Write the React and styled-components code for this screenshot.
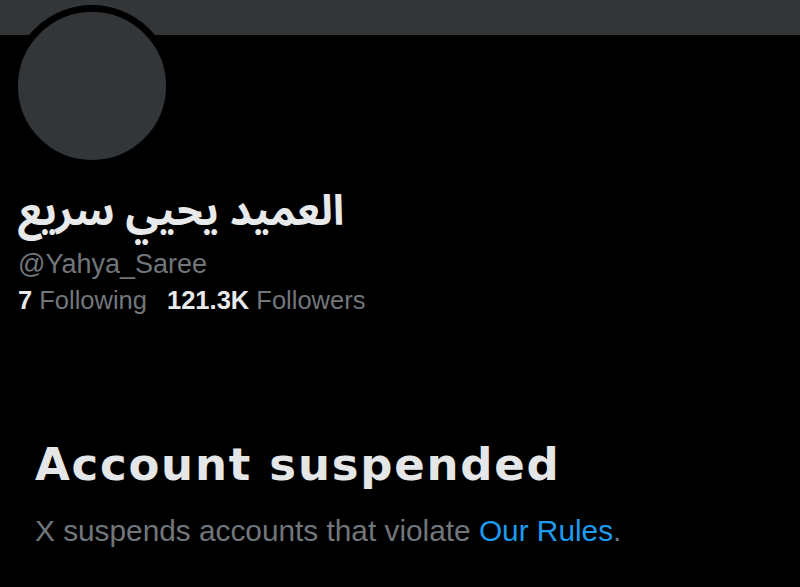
import React from "react";
import styled, { createGlobalStyle } from "styled-components";

const Global = createGlobalStyle`
  html, body { margin: 0; padding: 0; background: #000; }
  body { width: 800px; height: 587px; overflow: hidden; font-family: "Liberation Sans", Arial, sans-serif; }
`;

const Page = styled.div`
  width: 800px;
  height: 587px;
  background: #000;
  display: flex;
  flex-direction: column;
`;

const Banner = styled.div`
  height: 35px;
  background: #333639;
  flex: none;
`;

const Avatar = styled.div`
  width: 148px;
  height: 148px;
  border: 7px solid #000;
  border-radius: 50%;
  background: #333639;
  margin: -30px 0 0 11px;
  flex: none;
`;

const Profile = styled.div`
  display: flex;
  flex-direction: column;
  align-items: flex-start;
  padding-left: 18px;
`;

const Name = styled.div`
  direction: rtl;
  font-family: "Noto Sans Arabic", "DejaVu Sans", sans-serif;
  font-weight: 700;
  font-size: 42px;
  line-height: 50px;
  color: #e7e9ea;
  margin-top: 20px;
`;

const Handle = styled.div`
  font-size: 27px;
  line-height: 34px;
  color: #71767b;
  margin-top: 10px;
`;

const Stats = styled.div`
  display: flex;
  gap: 20px;
  font-size: 25.5px;
  line-height: 34px;
  color: #71767b;
  margin-top: 2px;
`;

const Stat = styled.span`
  & b {
    color: #e7e9ea;
    font-weight: 700;
  }
`;

const Suspended = styled.div`
  padding: 0 0 0 35px;
  margin-top: 118px;
  display: flex;
  flex-direction: column;
`;

const Title = styled.h1`
  margin: 0;
  font-family: "DejaVu Sans", "Liberation Sans", sans-serif;
  font-weight: 700;
  font-size: 45px;
  line-height: 60px;
  letter-spacing: 1.75px;
  color: #e4e6e7;
`;

const Note = styled.p`
  margin: 16px 0 0;
  font-size: 29.8px;
  line-height: 40px;
  color: #71767b;
`;

const Link = styled.span`
  color: #1d9bf0;
`;

export default function App() {
  return (
    <Page>
      <Global />
      <Banner />
      <Avatar />
      <Profile>
        <Name>العميد يحيي سريع</Name>
        <Handle>@Yahya_Saree</Handle>
        <Stats>
          <Stat><b>7</b> Following</Stat>
          <Stat><b>121.3K</b> Followers</Stat>
        </Stats>
      </Profile>
      <Suspended>
        <Title>Account suspended</Title>
        <Note>
          X suspends accounts that violate <Link>Our Rules</Link>.
        </Note>
      </Suspended>
    </Page>
  );
}
